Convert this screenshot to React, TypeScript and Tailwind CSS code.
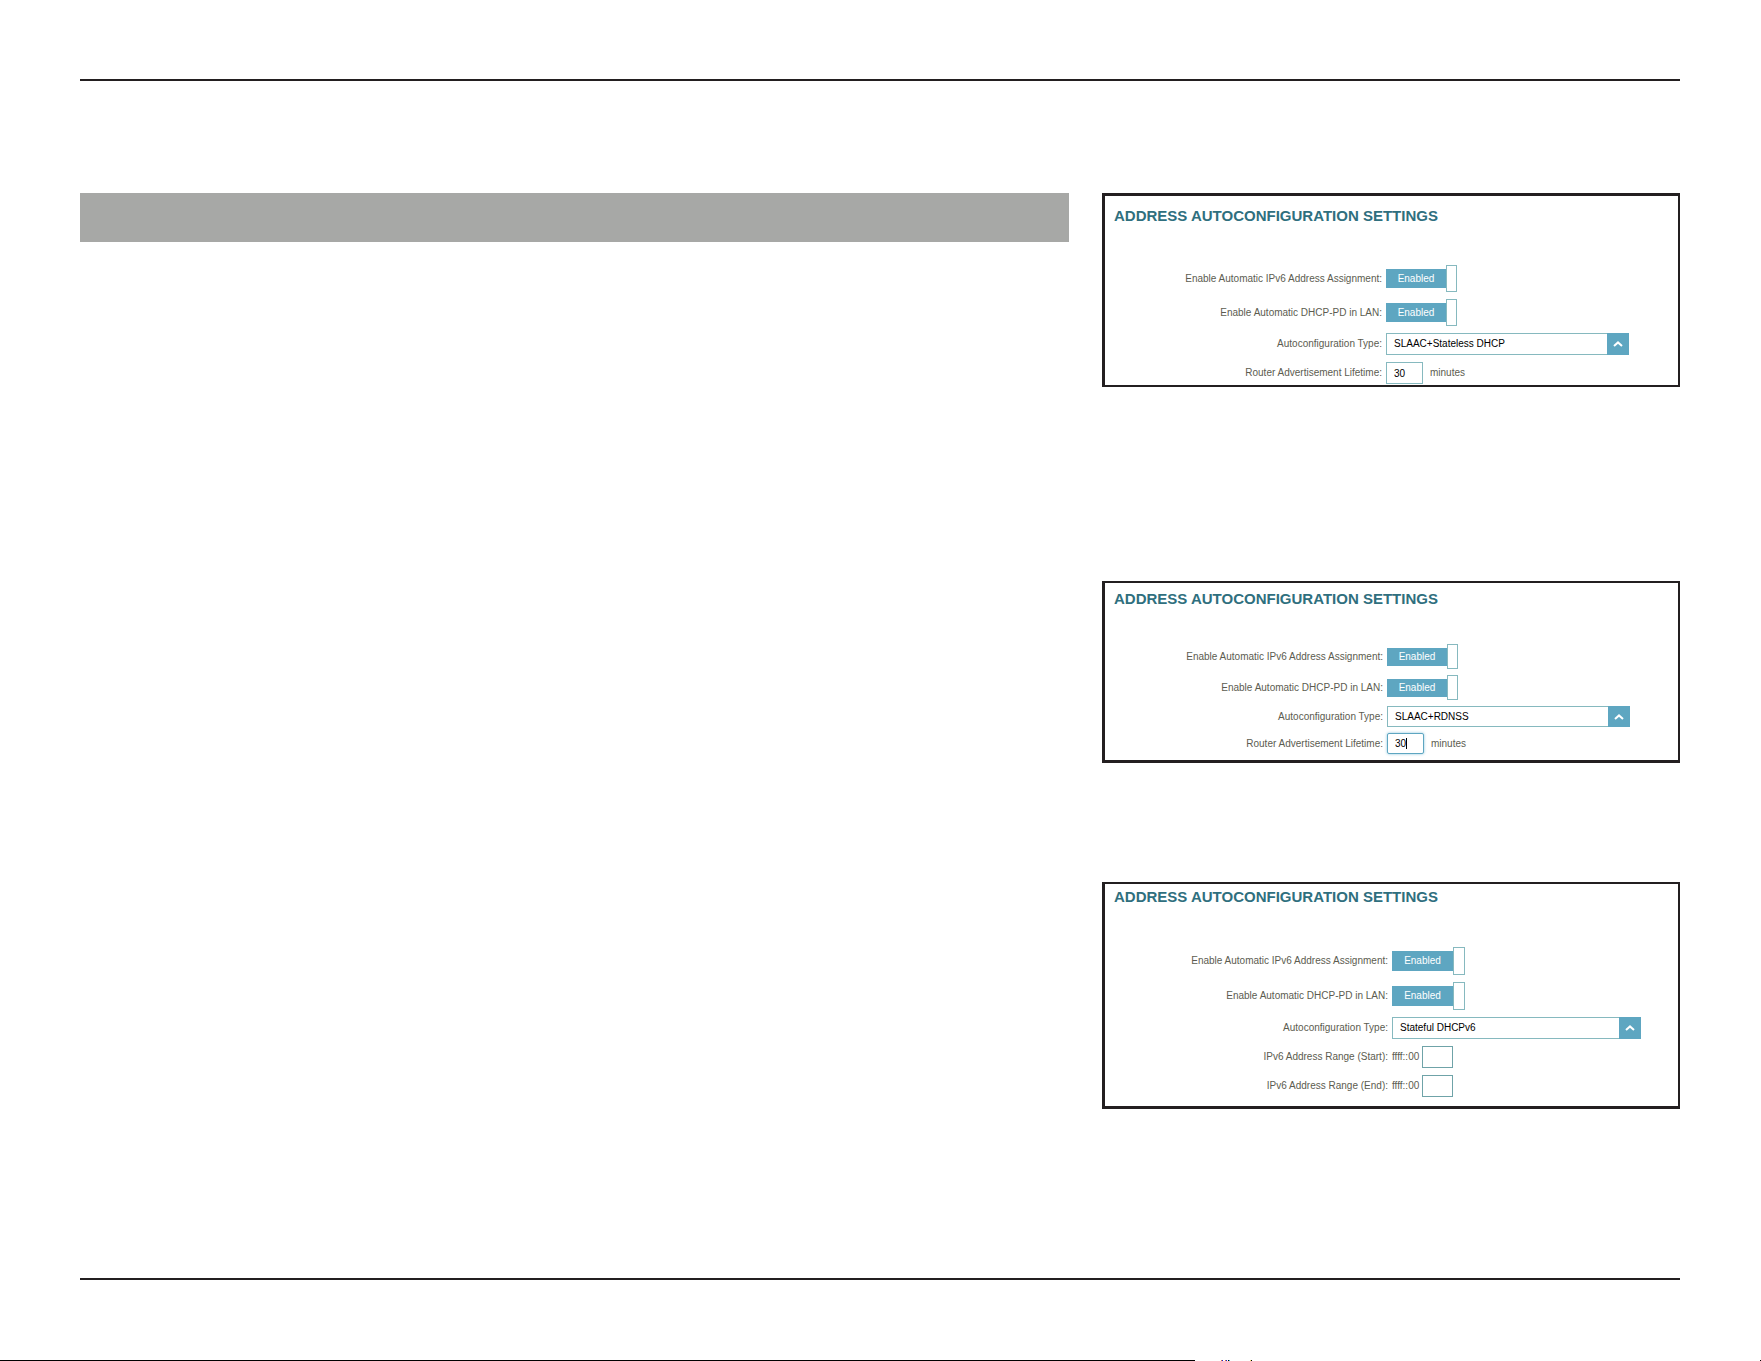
import { useState } from "react";
import type { ReactNode } from "react";
import clsx from "clsx";

type Size = "compact" | "normal" | "large";

const knobSizes = {
  compact: "h-[25px] w-[11px]",
  normal: "h-[27px] w-[11px]",
  large: "h-[28px] w-[12px]",
};

const trackSizes = {
  compact: "h-[18px] w-[60px]",
  normal: "h-[19px] w-[60px]",
  large: "h-[20px] w-[61px]",
};

const fieldHeights = {
  compact: "h-[21px]",
  normal: "h-[22px]",
  large: "h-[22px]",
};

const labelWidths = {
  compact: "w-[278px]",
  normal: "w-[277px]",
  large: "w-[283px]",
};

type RowProps = { id: string; label: string; size: Size; children: ReactNode };

const Row = ({ id, label, size, children }: RowProps) => (
  <div className="flex items-center gap-1">
    <label htmlFor={id} className={clsx("shrink-0 text-right whitespace-nowrap", labelWidths[size])}>
      {label}
    </label>
    {children}
  </div>
);

const Toggle = ({ id, size }: { id: string; size: Size }) => {
  const [on, setOn] = useState(true);
  return (
    <button id={id} type="button" role="switch" aria-checked={on} onClick={() => setOn(!on)} className="flex items-center">
      <span className={clsx("flex items-center justify-center bg-[#5ea6c1] text-white", trackSizes[size])}>
        {on ? "Enabled" : "Disabled"}
      </span>
      <span className={clsx("border border-[#86b9bf] bg-white", knobSizes[size])} />
    </button>
  );
};

const types = ["SLAAC+Stateless DHCP", "SLAAC+RDNSS", "Stateful DHCPv6"];

const TypeSelect = ({ id, size, value }: { id: string; size: Size; value: string }) => (
  <div className={clsx("flex", fieldHeights[size], size === "large" ? "w-[249px]" : "w-[243px]")}>
    <select
      id={id}
      defaultValue={value}
      className="min-w-0 flex-1 appearance-none border border-r-0 border-[#86b9bf] bg-white px-[7px] text-black outline-none"
    >
      {types.map((type) => (
        <option key={type}>{type}</option>
      ))}
    </select>
    <span className="flex w-[22px] items-center justify-center bg-[#5ea6c1]">
      <svg width="10" height="6" viewBox="0 0 10 6" fill="none" stroke="#fff" strokeWidth="2">
        <path d="M1 5 5 1.4 9 5" />
      </svg>
    </span>
  </div>
);

const Lifetime = ({ id, size, focused }: { id: string; size: Size; focused?: boolean }) => (
  <div className="flex items-center gap-[7px]">
    <div className="relative flex">
      <input
        id={id}
        type="text"
        defaultValue="30"
        className={clsx(
          "w-[37px] border bg-white px-[7px] text-black outline-none",
          fieldHeights[size],
          focused ? "rounded-xs border-[#5ea6c1] shadow-[0_0_3px_#8cc4dc]" : "border-[#86b9bf]"
        )}
      />
      {focused && <span className="absolute top-[5px] left-[19px] h-[11px] w-px bg-black" />}
    </div>
    <span>minutes</span>
  </div>
);

const RangeInput = ({ id }: { id: string }) => (
  <div className="flex items-center gap-[2px]">
    <span className="w-7">ffff::00</span>
    <input id={id} type="text" className="h-[22px] w-[31px] border border-[#6fa3a8] bg-white px-1 outline-none" />
  </div>
);

type PanelProps = { id: string; size: Size; type: string; className: string; rows: string; children: ReactNode };

const Panel = ({ id, size, type, className, rows, children }: PanelProps) => (
  <section className={clsx("border-[#231f20] bg-white", className)}>
    <h2 className="pl-[9px] text-[15px] leading-5 font-bold whitespace-nowrap text-[#2f6f7e]">
      ADDRESS AUTOCONFIGURATION SETTINGS
    </h2>
    <div className={clsx("flex flex-col", rows)}>
      <Row id={`${id}-assign`} label="Enable Automatic IPv6 Address Assignment:" size={size}>
        <Toggle id={`${id}-assign`} size={size} />
      </Row>
      <Row id={`${id}-pd`} label="Enable Automatic DHCP-PD in LAN:" size={size}>
        <Toggle id={`${id}-pd`} size={size} />
      </Row>
      <Row id={`${id}-type`} label="Autoconfiguration Type:" size={size}>
        <TypeSelect id={`${id}-type`} size={size} value={type} />
      </Row>
      {children}
    </div>
  </section>
);

const App = () => {
  return (
    <div className="bg-white font-['Liberation_Sans',Arial,sans-serif] text-[10px] leading-3 text-[#5c5c50]">
      <div className="pt-[79px] pr-[81px] pl-20">
        <hr className="border-t-2 border-[#231f20]" />
        <main className="grid grid-cols-[989fr_578fr] items-start gap-[33px] pt-28">
          <div className="h-[49px] bg-[#a7a8a6]" />
          <div>
            <Panel
              id="stateless"
              size="normal"
              type="SLAAC+Stateless DHCP"
              className="mb-[194px] border-t-3 border-r-2 border-b-2 border-l-3 pt-[10px] pb-px"
              rows="mt-[39px] gap-[7px]"
            >
              <Row id="stateless-life" label="Router Advertisement Lifetime:" size="normal">
                <Lifetime id="stateless-life" size="normal" />
              </Row>
            </Panel>
            <Panel
              id="rdnss"
              size="compact"
              type="SLAAC+RDNSS"
              className="mb-[119px] border-t-2 border-r-2 border-b-3 border-l-3 pt-[6px] pb-[6px]"
              rows="mt-[35px] gap-[6px]"
            >
              <Row id="rdnss-life" label="Router Advertisement Lifetime:" size="compact">
                <Lifetime id="rdnss-life" size="compact" focused />
              </Row>
            </Panel>
            <Panel
              id="stateful"
              size="large"
              type="Stateful DHCPv6"
              className="border-t-2 border-r-2 border-b-3 border-l-3 pt-[3px] pb-[9px]"
              rows="mt-[40px] gap-[7px]"
            >
              <Row id="stateful-start" label="IPv6 Address Range (Start):" size="large">
                <RangeInput id="stateful-start" />
              </Row>
              <Row id="stateful-end" label="IPv6 Address Range (End):" size="large">
                <RangeInput id="stateful-end" />
              </Row>
            </Panel>
          </div>
        </main>
        <hr className="mt-[169px] border-t-2 border-[#231f20]" />
      </div>
      <div className="mt-20 flex h-px">
        <div className="w-[1195px] bg-black" />
        <svg className="ml-[26px]" width="31" height="1" shapeRendering="crispEdges">
          <path d="M0 .5h1M4 .5h1" stroke="#d87a3a" />
          <path d="M1 .5h1M5 .5h1" stroke="#2020e0" />
          <path d="M7 .5h1M30 .5h1" stroke="#000" />
          <path d="M8 .5h1" stroke="#30c8d8" />
          <path d="M29 .5h1" stroke="#f0e060" />
        </svg>
        <div className="ml-auto w-px bg-black" />
      </div>
    </div>
  );
};

export default App;
